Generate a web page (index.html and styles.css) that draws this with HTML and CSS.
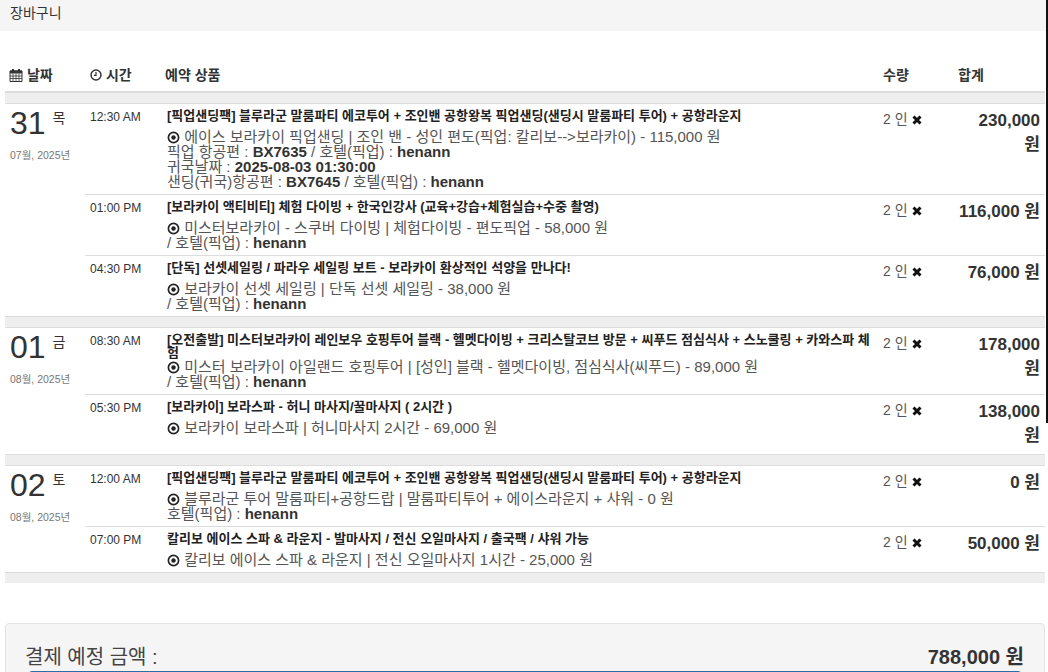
FILE: index.html
```html
<!DOCTYPE html>
<html lang="ko">
<head>
<meta charset="utf-8">
<title>장바구니</title>
<link rel="stylesheet" href="styles.css">
</head>
<body>
<div class="topbar">장바구니</div>
<div class="edge"></div>
<main class="content">
<table class="cart">
<thead>
<tr>
<th class="c-date"><svg class="hicon" viewBox="0 0 14 14"><path d="M1 3h12v10.500H1z" fill="none" stroke="currentColor" stroke-width="1"/><path d="M1 2.500h12V5.500H1zM3 1h2v2.500H3zM9 1h2v2.500H9z" fill="currentColor"/><path d="M1 8h12M1 10.500h12M4 5.500v8M7 5.500v8M10 5.500v8" stroke="currentColor" stroke-width=".8"/></svg> 날짜</th>
<th class="c-time"><svg class="hicon clock" viewBox="0 0 14 14"><circle cx="7" cy="7" r="5.800" fill="none" stroke="currentColor" stroke-width="1.700"/><path d="M7 3.500V7.500H4.500" fill="none" stroke="currentColor" stroke-width="1.400"/></svg> 시간</th>
<th class="c-prod">예약 상품</th>
<th class="c-qty">수량</th>
<th class="c-sum">합계</th>
</tr>
</thead>
<tbody>
<tr class="gap"><td colspan="5"></td></tr>
<tr class="row first">
<td class="date" rowspan="3"><span class="day">31</span><span class="dow">목</span><div class="ym">07월, 2025년</div></td>
<td class="time">12:30 AM</td>
<td class="prod"><div class="title">[픽업샌딩팩] 블루라군 말룸파티 에코투어 + 조인밴 공항왕복 픽업샌딩(샌딩시 말룸파티 투어) + 공항라운지</div>
<div class="desc"><svg class="dot" viewBox="0 0 14 14"><circle cx="7" cy="7" r="5.500" fill="none" stroke="currentColor" stroke-width="1.800"/><circle cx="7" cy="7" r="2.400" fill="currentColor"/></svg> 에이스 보라카이 픽업샌딩 | 조인 밴 - 성인 편도(픽업: 칼리보--&gt;보라카이) - 115,000 원<br>픽업 항공편 : <b>BX7635</b> / 호텔(픽업) : <b>henann</b><br>귀국날짜 : <b>2025-08-03 01:30:00</b><br>샌딩(귀국)항공편 : <b>BX7645</b> / 호텔(픽업) : <b>henann</b></div></td>
<td class="qty">2 인 <svg class="x" viewBox="0 0 12 12"><path d="M2.500 2.500l7 7M9.500 2.500l-7 7" stroke="currentColor" stroke-width="3"/></svg></td>
<td class="sum">230,000 원</td>
</tr>
<tr class="row">
<td class="time">01:00 PM</td>
<td class="prod"><div class="title">[보라카이 액티비티] 체험 다이빙 + 한국인강사 (교육+강습+체험실습+수중 촬영)</div>
<div class="desc"><svg class="dot" viewBox="0 0 14 14"><circle cx="7" cy="7" r="5.500" fill="none" stroke="currentColor" stroke-width="1.800"/><circle cx="7" cy="7" r="2.400" fill="currentColor"/></svg> 미스터보라카이 - 스쿠버 다이빙 | 체험다이빙 - 편도픽업 - 58,000 원<br>/ 호텔(픽업) : <b>henann</b></div></td>
<td class="qty">2 인 <svg class="x" viewBox="0 0 12 12"><path d="M2.500 2.500l7 7M9.500 2.500l-7 7" stroke="currentColor" stroke-width="3"/></svg></td>
<td class="sum">116,000 원</td>
</tr>
<tr class="row">
<td class="time">04:30 PM</td>
<td class="prod"><div class="title">[단독] 선셋세일링 / 파라우 세일링 보트 - 보라카이 환상적인 석양을 만나다!</div>
<div class="desc"><svg class="dot" viewBox="0 0 14 14"><circle cx="7" cy="7" r="5.500" fill="none" stroke="currentColor" stroke-width="1.800"/><circle cx="7" cy="7" r="2.400" fill="currentColor"/></svg> 보라카이 선셋 세일링 | 단독 선셋 세일링 - 38,000 원<br>/ 호텔(픽업) : <b>henann</b></div></td>
<td class="qty">2 인 <svg class="x" viewBox="0 0 12 12"><path d="M2.500 2.500l7 7M9.500 2.500l-7 7" stroke="currentColor" stroke-width="3"/></svg></td>
<td class="sum">76,000 원</td>
</tr>
<tr class="gap"><td colspan="5"></td></tr>
<tr class="row first">
<td class="date" rowspan="2"><span class="day">01</span><span class="dow">금</span><div class="ym">08월, 2025년</div></td>
<td class="time">08:30 AM</td>
<td class="prod"><div class="title">[오전출발] 미스터보라카이 레인보우 호핑투어 블랙 - 헬멧다이빙 + 크리스탈코브 방문 + 씨푸드 점심식사 + 스노쿨링 + 카와스파 체험</div>
<div class="desc"><svg class="dot" viewBox="0 0 14 14"><circle cx="7" cy="7" r="5.500" fill="none" stroke="currentColor" stroke-width="1.800"/><circle cx="7" cy="7" r="2.400" fill="currentColor"/></svg> 미스터 보라카이 아일랜드 호핑투어 | [성인] 블랙 - 헬멧다이빙, 점심식사(씨푸드) - 89,000 원<br>/ 호텔(픽업) : <b>henann</b></div></td>
<td class="qty">2 인 <svg class="x" viewBox="0 0 12 12"><path d="M2.500 2.500l7 7M9.500 2.500l-7 7" stroke="currentColor" stroke-width="3"/></svg></td>
<td class="sum">178,000 원</td>
</tr>
<tr class="row">
<td class="time">05:30 PM</td>
<td class="prod"><div class="title">[보라카이] 보라스파 - 허니 마사지/꿀마사지 ( 2시간 )</div>
<div class="desc"><svg class="dot" viewBox="0 0 14 14"><circle cx="7" cy="7" r="5.500" fill="none" stroke="currentColor" stroke-width="1.800"/><circle cx="7" cy="7" r="2.400" fill="currentColor"/></svg> 보라카이 보라스파 | 허니마사지 2시간 - 69,000 원</div></td>
<td class="qty">2 인 <svg class="x" viewBox="0 0 12 12"><path d="M2.500 2.500l7 7M9.500 2.500l-7 7" stroke="currentColor" stroke-width="3"/></svg></td>
<td class="sum">138,000 원</td>
</tr>
<tr class="gap"><td colspan="5"></td></tr>
<tr class="row first">
<td class="date" rowspan="2"><span class="day">02</span><span class="dow">토</span><div class="ym">08월, 2025년</div></td>
<td class="time">12:00 AM</td>
<td class="prod"><div class="title">[픽업샌딩팩] 블루라군 말룸파티 에코투어 + 조인밴 공항왕복 픽업샌딩(샌딩시 말룸파티 투어) + 공항라운지</div>
<div class="desc"><svg class="dot" viewBox="0 0 14 14"><circle cx="7" cy="7" r="5.500" fill="none" stroke="currentColor" stroke-width="1.800"/><circle cx="7" cy="7" r="2.400" fill="currentColor"/></svg> 블루라군 투어 말룸파티+공항드랍 | 말룸파티투어 + 에이스라운지 + 샤워 - 0 원<br>호텔(픽업) : <b>henann</b></div></td>
<td class="qty">2 인 <svg class="x" viewBox="0 0 12 12"><path d="M2.500 2.500l7 7M9.500 2.500l-7 7" stroke="currentColor" stroke-width="3"/></svg></td>
<td class="sum">0 원</td>
</tr>
<tr class="row">
<td class="time">07:00 PM</td>
<td class="prod"><div class="title">칼리보 에이스 스파 &amp; 라운지 - 발마사지 / 전신 오일마사지 / 출국팩 / 샤워 가능</div>
<div class="desc"><svg class="dot" viewBox="0 0 14 14"><circle cx="7" cy="7" r="5.500" fill="none" stroke="currentColor" stroke-width="1.800"/><circle cx="7" cy="7" r="2.400" fill="currentColor"/></svg> 칼리보 에이스 스파 &amp; 라운지 | 전신 오일마사지 1시간 - 25,000 원</div></td>
<td class="qty">2 인 <svg class="x" viewBox="0 0 12 12"><path d="M2.500 2.500l7 7M9.500 2.500l-7 7" stroke="currentColor" stroke-width="3"/></svg></td>
<td class="sum">50,000 원</td>
</tr>
<tr class="gap last"><td colspan="5"></td></tr>
</tbody>
</table>
<section class="well">
<div class="well-row"><span class="well-label">결제 예정 금액 :</span><b class="well-total">788,000 원</b></div>
<div class="well-btn"></div>
</section>
</main>
</body>
</html>
```
FILE: styles.css
```css
html, body { margin: 0; padding: 0; height: 672px; overflow: hidden; background: #fff; }
body { position: relative; font-family: "Liberation Sans", "Noto Sans CJK KR", sans-serif; font-size: 14px; line-height: 1.1; color: #333; }
.topbar { height: 31px; box-sizing: border-box; padding: 5px 10px; background: #f5f5f5; font-size: 14px; line-height: 17px; }
.edge { position: absolute; top: 0; right: 0; width: 2px; height: 423px; background: #111; }
.content { padding: 36px 3px 0 5px; }
.cart { width: 1040px; border-collapse: collapse; table-layout: fixed; }
.cart th { box-sizing: border-box; text-align: left; padding: 0 5px 7px; height: 25px; vertical-align: middle; font-size: 14px; font-weight: bold; border-bottom: 2px solid #ddd; }
.cart .c-date { width: 80px; padding-left: 4px; }
.c-time { width: 75px; }
.c-prod { width: 718px; }
.c-qty { width: 75px; }
.c-sum { width: 92px; }
.hicon { width: 14px; height: 14px; vertical-align: -2px; }
.clock { width: 12px; height: 12px; vertical-align: -1px; }
.gap td { height: 10px; padding: 0; background: #eee; border-bottom: 1px solid #ddd; }
.gap.last td { border-bottom: 0; }
.row td { vertical-align: top; padding: 5px 5px 5px; border-bottom: 1px solid #ddd; }
.row .date { padding: 0 5px; }
.day { font-size: 32px; line-height: 38px; }
.dow { font-size: 14px; line-height: 16px; vertical-align: 11px; margin-left: 7px; }
.ym { font-size: 10.500px; color: #777; margin-top: 8px; }
.time { font-size: 12px; }
.row .time { padding-top: 7px; }
.row .prod { padding-left: 7px; }
.title { font-size: 13px; line-height: 13px; min-height: 20px; font-weight: bold; color: #222; }
.desc { font-size: 15px; line-height: 15px; color: #555; }
.desc b { color: #333; }
.dot { width: 13px; height: 13px; vertical-align: -2px; color: #222; }
.row .qty { font-size: 14px; line-height: 15px; white-space: nowrap; padding-top: 8px; color: #555; }
.x { width: 12px; height: 12px; color: #111; vertical-align: -2px; }
.row .sum { font-size: 17px; line-height: 24px; font-weight: bold; text-align: right; padding: 5px 5px 6px 6px; }
.well { margin-top: 40px; width: 1040px; height: 80px; box-sizing: border-box; background: #f5f5f5; border: 1px solid #e3e3e3; border-radius: 4px; padding: 21px 20px 0 19px; }
.well-row { display: flex; justify-content: space-between; align-items: center; height: 24px; }
.well-label { font-size: 20px; color: #444; }
.well-total { font-size: 20px; }
.well-btn { height: 20px; margin: 2px 2px 0 3px; background: #337ab7; border-radius: 4px 4px 0 0; border: 1px solid #2e6da4; }
```
